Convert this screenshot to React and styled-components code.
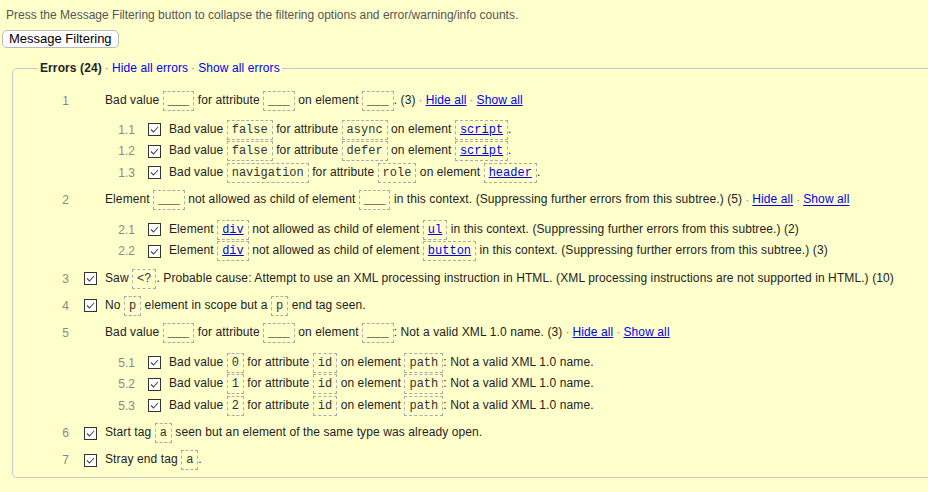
import React from "react";
import styled, { createGlobalStyle } from "styled-components";

const GlobalStyle = createGlobalStyle`
  html, body {
    margin: 0;
    padding: 0;
    background: #ffffcc;
    overflow: hidden;
  }
  body {
    font-family: "Liberation Sans", Arial, sans-serif;
    font-size: 12px;
    color: #333;
  }
`;

const Page = styled.div`
  padding: 8px 2px 0 2px;
  width: 940px;
`;

const Intro = styled.p`
  margin: 0 0 8px 4px;
  color: #555;
  line-height: 14px;
`;

const FilterButton = styled.button`
  font-family: "Liberation Sans", Arial, sans-serif;
  font-size: 13px;
  color: #000;
  background: #fff;
  border: 1px solid #bbb;
  border-radius: 5px;
  height: 18px;
  padding: 0 6px;
  line-height: 16px;
`;

const Fieldset = styled.fieldset`
  margin: 13px 0 0 10px;
  padding: 0 0 3px 0;
  border: 1px solid #c8c8c8;
  border-radius: 5px;
  min-width: 0;
`;

const Legend = styled.legend`
  margin-left: 25px;
  padding: 0 2px;
  line-height: 14px;
  font-weight: bold;
  color: #222;
  letter-spacing: 0.1px;
`;

const LegendLink = styled.a`
  font-weight: normal;
  color: #0000ee;
  text-decoration: none;
`;

const Dot = styled.span`
  color: #888;
  font-weight: normal;
  padding: 0 3px;
`;

const List = styled.ol`
  list-style: none;
  margin: 12px 0 0 0;
  padding: 0 0 0 26px;
`;

const SubList = styled.ol`
  list-style: none;
  margin: 8px 0 0 0;
  padding: 0 0 0 66px;
`;

const Item = styled.li`
  padding: ${(p) => (p.$sub ? "0" : "3.15px 0")};
`;

const Line = styled.div`
  display: flex;
  align-items: center;
  height: ${(p) => (p.$sub ? "21.5px" : "21px")};
  white-space: nowrap;
`;

const Num = styled.span`
  width: 30px;
  text-align: right;
  color: #888;
  flex: none;
`;

const CheckSlot = styled.span`
  width: 13px;
  height: 13px;
  margin: 0 8px 0 ${(p) => (p.$sub ? "13px" : "15px")};
  flex: none;
  box-sizing: border-box;
  border: ${(p) => (p.$on ? "1px solid #333" : "none")};
  background: ${(p) => (p.$on ? "#fff" : "transparent")};
  display: flex;
  align-items: center;
  justify-content: center;
`;

const Text = styled.span`
  color: #222;
  letter-spacing: 0.1px;
`;

const Code = styled.code`
  display: inline-block;
  vertical-align: middle;
  font-family: "Liberation Mono", "Courier New", monospace;
  font-size: 12px;
  line-height: 18px;
  letter-spacing: 0;
  padding: 0 4px;
  border: 1px dashed #aaa;
  color: ${(p) => (p.$link ? "#0000ee" : "#333")};
  text-decoration: ${(p) => (p.$link ? "underline" : "none")};
`;

const Link = styled.a`
  color: #0000ee;
  text-decoration: underline;
`;

const Blank = () => <Code>___</Code>;

const Check = ({ on, sub }) => (
  <CheckSlot $on={on} $sub={sub}>
    {on && (
      <svg width="11" height="11" viewBox="0 0 11 11">
        <path d="M2 5.5 L4.5 8 L9 3" fill="none" stroke="#444" strokeWidth="1.1" />
      </svg>
    )}
  </CheckSlot>
);

const Counts = ({ n }) => (
  <>
    {" "}({n})<Dot>·</Dot>
    <Link href="#">Hide all</Link>
    <Dot>·</Dot>
    <Link href="#">Show all</Link>
  </>
);

const messages = [
  {
    num: "1",
    body: (
      <>
        Bad value <Blank /> for attribute <Blank /> on element <Blank />.<Counts n={3} />
      </>
    ),
    children: [
      {
        num: "1.1",
        body: (
          <>
            Bad value <Code>false</Code> for attribute <Code>async</Code> on element{" "}
            <Code $link>script</Code>.
          </>
        ),
      },
      {
        num: "1.2",
        body: (
          <>
            Bad value <Code>false</Code> for attribute <Code>defer</Code> on element{" "}
            <Code $link>script</Code>.
          </>
        ),
      },
      {
        num: "1.3",
        body: (
          <>
            Bad value <Code>navigation</Code> for attribute <Code>role</Code> on element{" "}
            <Code $link>header</Code>.
          </>
        ),
      },
    ],
  },
  {
    num: "2",
    body: (
      <>
        Element <Blank /> not allowed as child of element <Blank /> in this context.
        (Suppressing further errors from this subtree.)<Counts n={5} />
      </>
    ),
    children: [
      {
        num: "2.1",
        body: (
          <>
            Element <Code $link>div</Code> not allowed as child of element <Code $link>ul</Code> in
            this context. (Suppressing further errors from this subtree.) (2)
          </>
        ),
      },
      {
        num: "2.2",
        body: (
          <>
            Element <Code $link>div</Code> not allowed as child of element{" "}
            <Code $link>button</Code> in this context. (Suppressing further errors from this
            subtree.) (3)
          </>
        ),
      },
    ],
  },
  {
    num: "3",
    checked: true,
    body: (
      <>
        Saw <Code>{"<?"}</Code>. Probable cause: Attempt to use an XML processing instruction in
        HTML. (XML processing instructions are not supported in HTML.) (10)
      </>
    ),
  },
  {
    num: "4",
    checked: true,
    body: (
      <>
        No <Code>p</Code> element in scope but a <Code>p</Code> end tag seen.
      </>
    ),
  },
  {
    num: "5",
    body: (
      <>
        Bad value <Blank /> for attribute <Blank /> on element <Blank />: Not a valid XML 1.0
        name.<Counts n={3} />
      </>
    ),
    children: ["0", "1", "2"].map((v, i) => ({
      num: `5.${i + 1}`,
      body: (
        <>
          Bad value <Code>{v}</Code> for attribute <Code>id</Code> on element <Code>path</Code>:
          Not a valid XML 1.0 name.
        </>
      ),
    })),
  },
  {
    num: "6",
    checked: true,
    body: (
      <>
        Start tag <Code>a</Code> seen but an element of the same type was already open.
      </>
    ),
  },
  {
    num: "7",
    checked: true,
    body: (
      <>
        Stray end tag <Code>a</Code>.
      </>
    ),
  },
];

const Message = ({ msg, sub }) => (
  <Item $sub={sub}>
    <Line $sub={sub}>
      <Num>{msg.num}</Num>
      <Check on={sub || msg.checked} sub={sub} />
      <Text>{msg.body}</Text>
    </Line>
    {msg.children && (
      <SubList>
        {msg.children.map((c) => (
          <Message key={c.num} msg={c} sub />
        ))}
      </SubList>
    )}
  </Item>
);

export default function App() {
  return (
    <>
      <GlobalStyle />
      <Page>
        <Intro>
          Press the Message Filtering button to collapse the filtering options and
          error/warning/info counts.
        </Intro>
        <FilterButton>Message Filtering</FilterButton>
        <Fieldset>
          <Legend>
            Errors (24)<Dot>·</Dot>
            <LegendLink href="#">Hide all errors</LegendLink>
            <Dot>·</Dot>
            <LegendLink href="#">Show all errors</LegendLink>
          </Legend>
          <List>
            {messages.map((m) => (
              <Message key={m.num} msg={m} />
            ))}
          </List>
        </Fieldset>
      </Page>
    </>
  );
}
